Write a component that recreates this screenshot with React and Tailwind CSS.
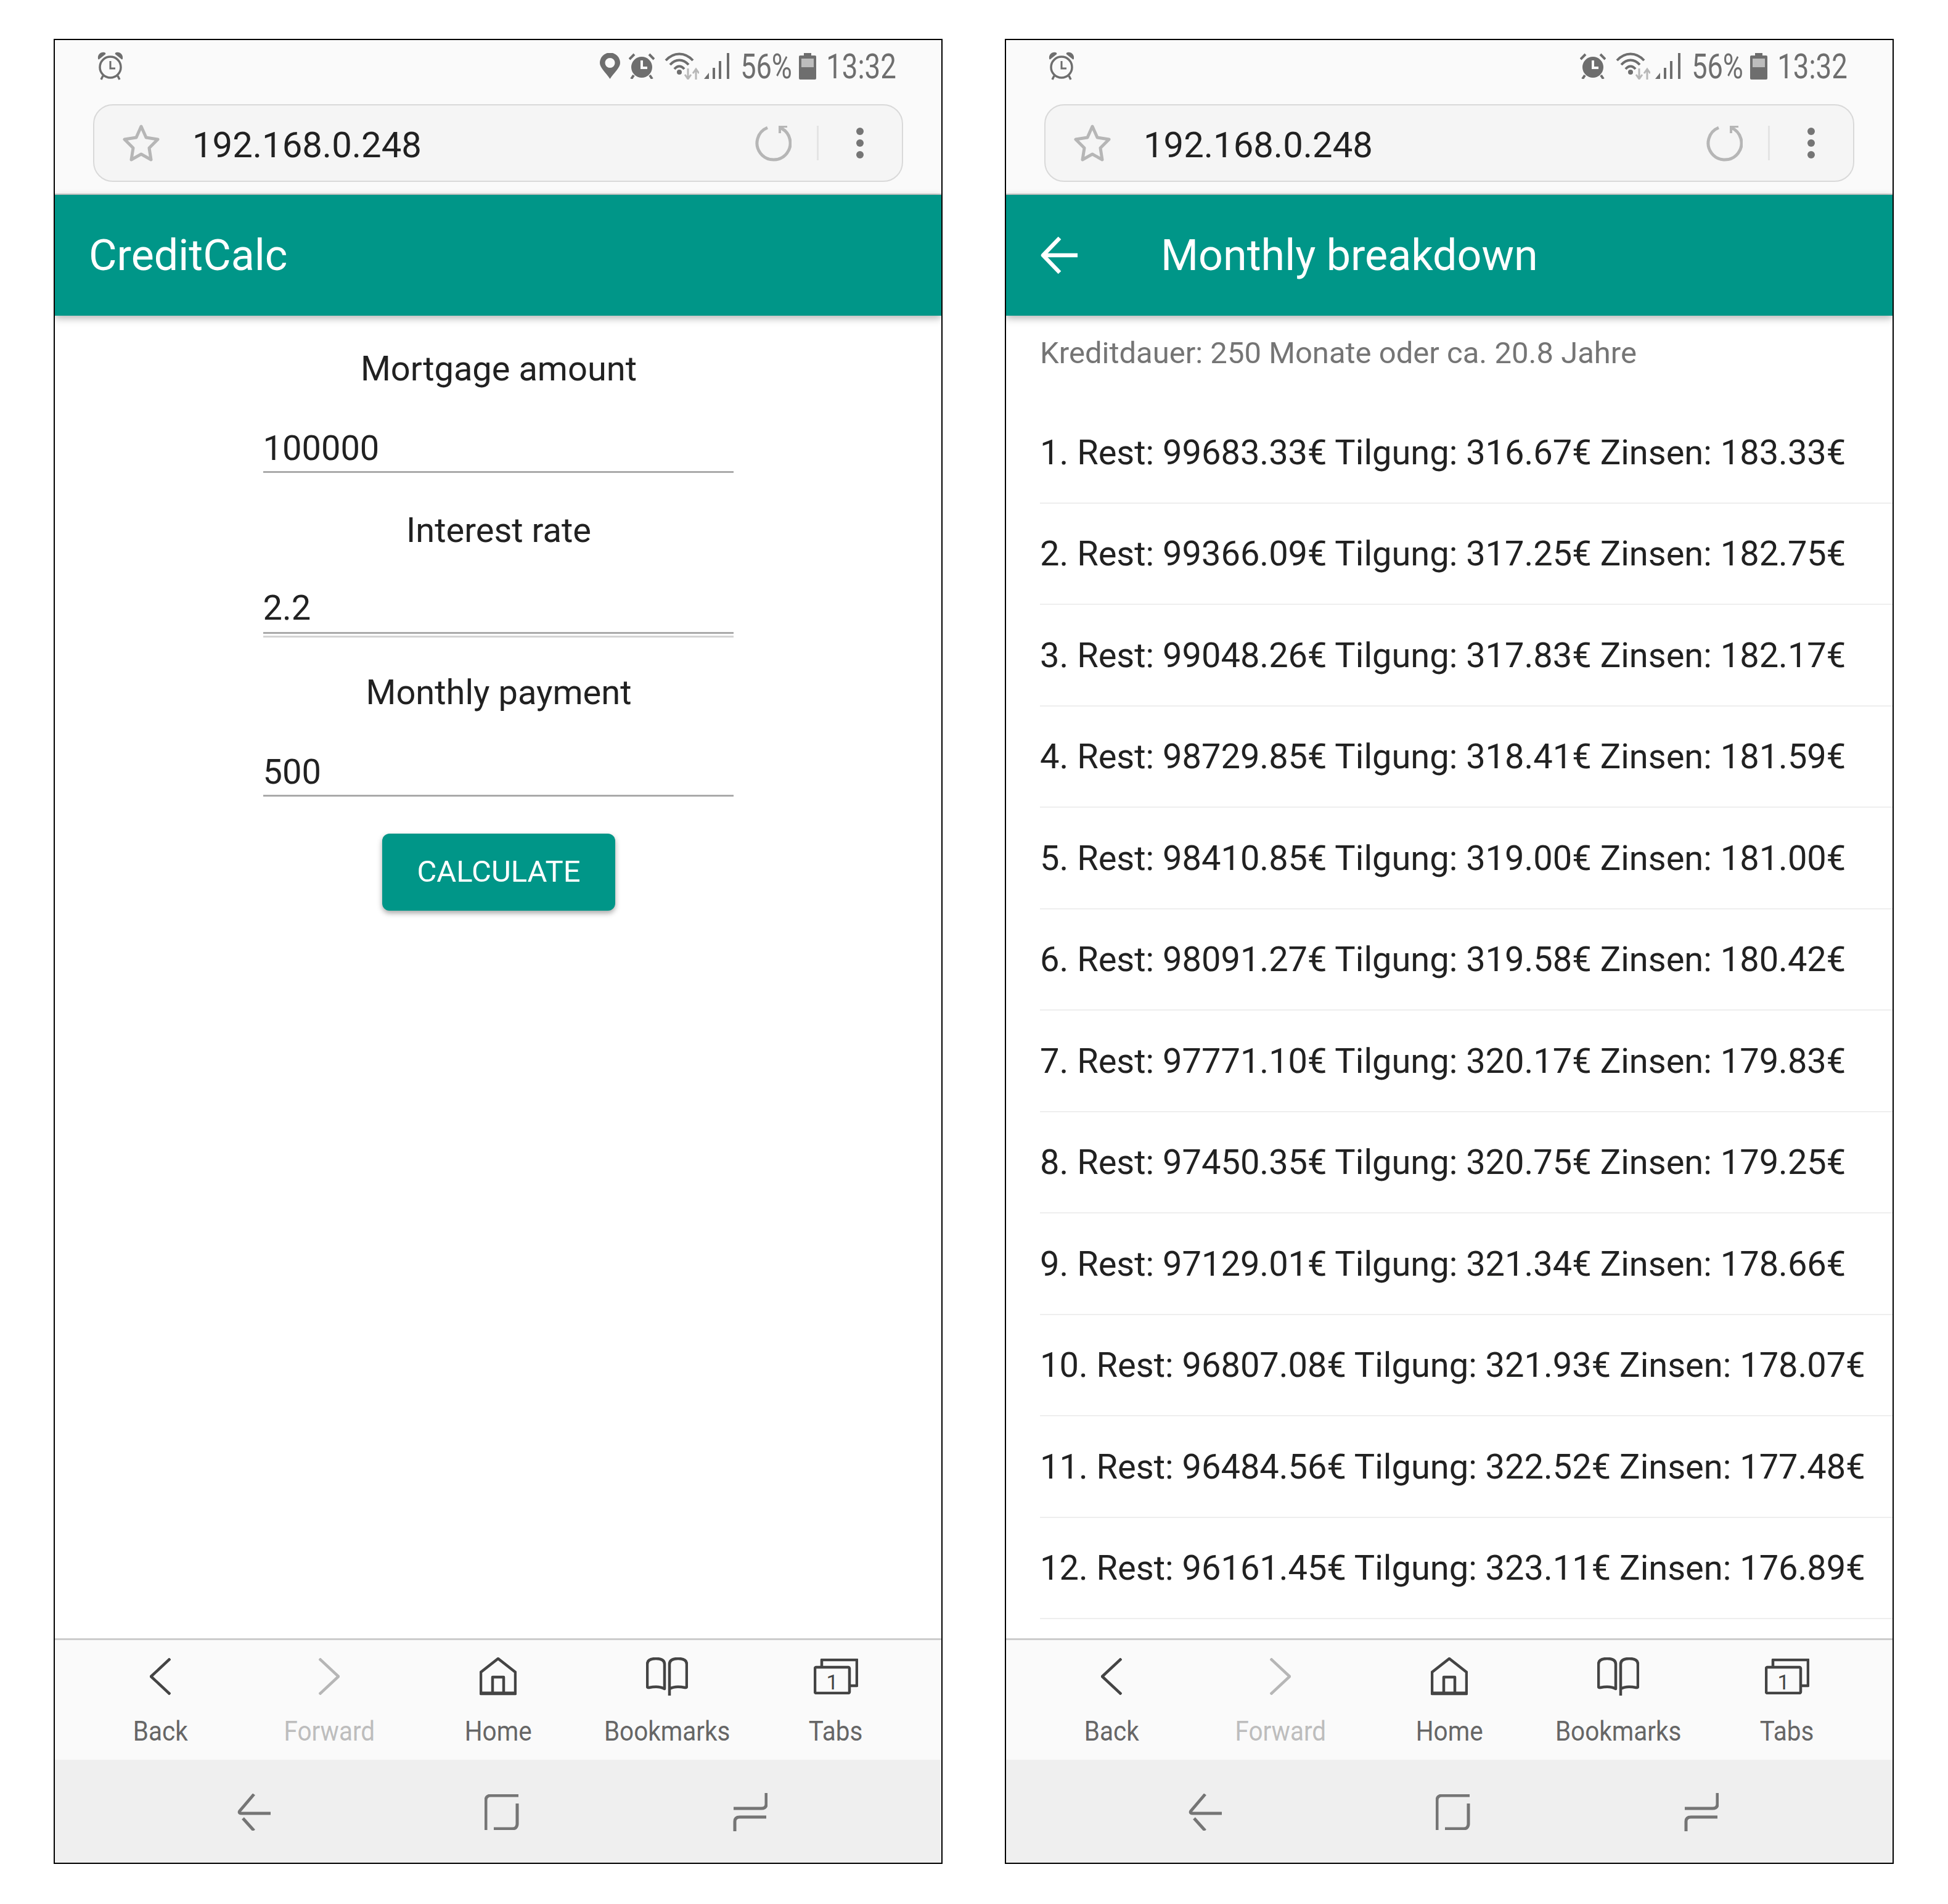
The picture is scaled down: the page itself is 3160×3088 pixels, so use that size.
const rows = [
  '1. Rest: 99683.33€ Tilgung: 316.67€ Zinsen: 183.33€',
  '2. Rest: 99366.09€ Tilgung: 317.25€ Zinsen: 182.75€',
  '3. Rest: 99048.26€ Tilgung: 317.83€ Zinsen: 182.17€',
  '4. Rest: 98729.85€ Tilgung: 318.41€ Zinsen: 181.59€',
  '5. Rest: 98410.85€ Tilgung: 319.00€ Zinsen: 181.00€',
  '6. Rest: 98091.27€ Tilgung: 319.58€ Zinsen: 180.42€',
  '7. Rest: 97771.10€ Tilgung: 320.17€ Zinsen: 179.83€',
  '8. Rest: 97450.35€ Tilgung: 320.75€ Zinsen: 179.25€',
  '9. Rest: 97129.01€ Tilgung: 321.34€ Zinsen: 178.66€',
  '10. Rest: 96807.08€ Tilgung: 321.93€ Zinsen: 178.07€',
  '11. Rest: 96484.56€ Tilgung: 322.52€ Zinsen: 177.48€',
  '12. Rest: 96161.45€ Tilgung: 323.11€ Zinsen: 176.89€',
];

const AlarmOutline = () => (
  <svg width="42" height="46" viewBox="0 0 42 46" fill="none">
    <path d="M1 11C0 5 5 0 11 1c2 0 3 2 2 3L3 12c-1 1-2 0-2-1zM41 11c1-6-4-11-10-10-2 0-3 2-2 3l10 8c1 1 2 0 2-1z" fill="#6e6e6e" />
    <circle cx="21" cy="25" r="17" stroke="#6e6e6e" strokeWidth="3.5" />
    <path d="M21 15v12h8" stroke="#6e6e6e" strokeWidth="3" />
    <path d="M9 39l-3 6M33 39l3 6" stroke="#6e6e6e" strokeWidth="3.5" />
  </svg>
);

const AlarmFilled = () => (
  <svg width="42" height="42" viewBox="0 0 42 42" fill="none">
    <circle cx="21" cy="23" r="17" fill="#6e6e6e" />
    <path d="M1 10L9 2M41 10L33 2" stroke="#6e6e6e" strokeWidth="4" />
    <path d="M8 36l-4 6M34 36l4 6" stroke="#6e6e6e" strokeWidth="4" />
    <path d="M21 12v12h9" stroke="#fafafa" strokeWidth="4" />
  </svg>
);

const Pin = () => (
  <svg width="33" height="42" viewBox="0 0 33 42" fill="none">
    <path fillRule="evenodd" d="M16.5 42C10 32 0 24 0 16a16.5 16.5 0 0 1 33 0c0 8-10 16-16.5 26zM16.5 8a8 8 0 1 0 0 16 8 8 0 0 0 0-16z" fill="#6e6e6e" />
  </svg>
);

const Wifi = () => (
  <svg width="56" height="44" viewBox="0 0 56 44" fill="none">
    <path d="M2 13C15 -1 33 -1 46 13M9 20C18 10 30 10 39 20M16 27C21 21 27 21 32 27" stroke="#6e6e6e" strokeWidth="4" />
    <circle cx="24" cy="32" r="4" fill="#6e6e6e" />
    <path d="M38 26v15M33 36l5 7 5-7" stroke="#b8b8b8" strokeWidth="3" />
    <path d="M51 44V28M46 34l5-7 5 7" stroke="#b8b8b8" strokeWidth="3" />
  </svg>
);

const Signal = () => (
  <svg width="42" height="42" viewBox="0 0 42 42" fill="#6e6e6e">
    <path d="M0 42L8 32v10z" />
    <rect x="14" y="24" width="4" height="18" />
    <rect x="24" y="13" width="4" height="29" />
    <rect x="37" y="0" width="4" height="42" />
  </svg>
);

const Battery = () => (
  <svg width="28" height="43" viewBox="0 0 28 43">
    <path d="M8 0h12v4h6a2 2 0 0 1 2 2v35a2 2 0 0 1-2 2H2a2 2 0 0 1-2-2V6a2 2 0 0 1 2-2h6z" fill="#6e6e6e" />
    <rect x="4" y="9" width="20" height="14" fill="#bdbdbd" />
  </svg>
);

const Star = () => (
  <svg width="60" height="60" viewBox="0 0 60 60" fill="none">
    <path d="M30 3l8 18 19 3-14 14 3 19-16-9-16 9 3-19L3 24l19-3z" stroke="#b6b6b6" strokeWidth="5" strokeLinejoin="round" />
  </svg>
);

const Reload = () => (
  <svg width="60" height="60" viewBox="0 0 60 60" fill="none">
    <path d="M21 5A27 27 0 1 0 41 5" stroke="#b6b6b6" strokeWidth="5" />
    <path d="M39 14V2h14v3H43v9z" fill="#b6b6b6" />
  </svg>
);

const Dots = () => (
  <svg width="12" height="50" viewBox="0 0 12 50" fill="#757575">
    <circle cx="6" cy="6" r="6" />
    <circle cx="6" cy="25" r="6" />
    <circle cx="6" cy="44" r="6" />
  </svg>
);

const ArrowBack = () => (
  <svg width="60" height="60" viewBox="0 0 60 60" fill="none">
    <path d="M31 2L4 30l27 28" stroke="#fff" strokeWidth="6.5" strokeLinejoin="round" />
    <path d="M6 30h54" stroke="#fff" strokeWidth="6.5" />
  </svg>
);

const Toolbar = () => {
  const items = [
    { label: 'Back', color: 'text-[#666666]', icon: <svg width="34" height="60" viewBox="0 0 34 60" fill="none"><path d="M33 1L2 30l31 29" stroke="#444" strokeWidth="4.5" strokeLinejoin="round" /></svg> },
    { label: 'Forward', color: 'text-[#bdbdbd]', icon: <svg width="34" height="60" viewBox="0 0 34 60" fill="none"><path d="M1 1l31 29L1 59" stroke="#b6b6b6" strokeWidth="4.5" strokeLinejoin="round" /></svg> },
    {
      label: 'Home',
      color: 'text-[#666666]',
      icon: (
        <svg width="60" height="62" viewBox="0 0 60 62" fill="none" stroke="#444" strokeWidth="4.5" strokeLinejoin="round">
          <path d="M30 2L2 24v35h56V24z" />
          <path d="M21 59V32h18v27" />
          <path d="M2 58h56" strokeWidth="5" />
        </svg>
      ),
    },
    {
      label: 'Bookmarks',
      color: 'text-[#666666]',
      icon: (
        <svg width="68" height="62" viewBox="0 0 68 62" fill="none" stroke="#444" strokeWidth="4.5" strokeLinejoin="round">
          <path d="M38 62V11C38 5 42 2 52 2s14 3 14 9v36c0 2-1 2-3 2-10-2-18-2-25 2" />
          <path d="M30 51c-7-4-15-4-25-2-2 0-3 0-3-2V11c0-6 4-9 14-9s14 3 14 9z" />
        </svg>
      ),
    },
    {
      label: 'Tabs',
      color: 'text-[#666666]',
      icon: (
        <svg width="72" height="58" viewBox="0 0 72 58" fill="none" stroke="#444" strokeWidth="4.5" strokeLinejoin="round">
          <path d="M13 13V2h57v42H58" />
          <rect x="2" y="14" width="56" height="42" rx="2" />
          <text x="30" y="50" textAnchor="middle" fill="#444" stroke="none" fontSize="34" fontFamily="Roboto, sans-serif">1</text>
        </svg>
      ),
    },
  ];
  return (
    <div className="h-[197px] bg-[#fafafa] border-t-[3px] border-[#cccccc] grid grid-cols-5 px-[34px]">
      {items.map((item) => (
        <div key={item.label} className="flex flex-col items-center">
          <div className="h-[62px] mt-[28px] flex items-center justify-center">{item.icon}</div>
          <div className={`mt-[28px] h-[60px] leading-[60px] flex justify-center whitespace-nowrap text-[44px] scale-x-[.92] ${item.color}`}>
            {item.label}
          </div>
        </div>
      ))}
    </div>
  );
};

const NavBar = () => (
  <div className="h-[167px] pt-[3px] bg-[#efefef] grid grid-cols-3 items-center pl-[122px] pr-[109px]">
    <div className="flex justify-center">
      <svg width="54" height="60" viewBox="0 0 54 60" fill="none" stroke="#757575" strokeWidth="5">
        <path d="M27 1L4 28c-2 3 0 4 3 4h47" />
        <path d="M9 40l18 20" />
      </svg>
    </div>
    <div className="flex justify-center">
      <svg width="56" height="58" viewBox="0 0 56 58" fill="none" stroke="#757575" strokeWidth="5">
        <path d="M2 58V10c0-5 3-8 8-8h45" />
        <path d="M53 15v33c0 5-3 8-8 8H15" />
      </svg>
    </div>
    <div className="flex justify-center">
      <svg width="56" height="62" viewBox="0 0 56 62" fill="none" stroke="#757575" strokeWidth="5">
        <path d="M54 0v18c0 5-3 7-8 7H1" />
        <path d="M54 39H11c-5 0-8 2-8 7v16" />
      </svg>
    </div>
  </div>
);

const Phone = ({ pin, children }) => (
  <div className="w-[1442px] h-[2960px] shrink-0 border-2 border-black flex flex-col overflow-hidden bg-white font-['Roboto',sans-serif]">
    <div className="h-[251px] shrink-0 bg-[#fafafa] border-b-2 border-[#cccccc] flex flex-col">
      <div className="h-[82px] flex items-center justify-between pl-[69px] pr-[75px] mt-[1px]">
        <AlarmOutline />
        <div className="flex items-center">
          {pin && <div className="mr-[14px]"><Pin /></div>}
          <AlarmFilled />
          <div className="ml-[16px]"><Wifi /></div>
          <div className="ml-[8px]"><Signal /></div>
          <div className="ml-[18px] w-[82px] pt-[2px] flex justify-center whitespace-nowrap text-[55px] text-[#6e6e6e] scale-x-[.82] leading-[60px]">56%</div>
          <div className="ml-[12px]"><Battery /></div>
          <div className="ml-[18px] w-[110px] pt-[2px] flex justify-center whitespace-nowrap text-[55px] text-[#6e6e6e] scale-x-[.83] leading-[60px]">13:32</div>
        </div>
      </div>
      <div className="mt-[21px] mx-[62px] h-[126px] rounded-[32px] border-2 border-[#d9d9d9] bg-[#f5f5f5] flex items-center pl-[46px] pr-[62px]">
        <Star />
        <div className="ml-[53px] pt-[6px] text-[58px] text-[#212121]">192.168.0.248</div>
        <div className="ml-auto"><Reload /></div>
        <div className="ml-[41px] w-[3px] h-[56px] bg-[#e4e4e4]" />
        <div className="ml-[61px]"><Dots /></div>
      </div>
    </div>
    {children}
    <Toolbar />
    <NavBar />
  </div>
);

const Field = ({ label, value, inputClass, double }) => (
  <div className="flex flex-col items-center">
    <div className="h-[66px] leading-[66px] text-[56px] text-[#212121] ml-[2px]">{label}</div>
    <div className={`w-[763px] h-[80px] text-[56px] text-[#212121] border-b-[3px] border-[#aaaaaa] box-content ${inputClass}`}>{value}</div>
    {double && <div className="w-[763px] h-[3px] mt-[3px] bg-[#d4d4d4]" />}
  </div>
);

export default function App() {
  return (
    <div className="min-h-screen bg-white flex gap-[101px] pl-[87px] pt-[63px]">
      <Phone pin>
        <div className="h-[196px] shrink-0 bg-[#009688] relative z-10 shadow-[0_4px_12px_rgba(0,0,0,0.3)] flex items-center pl-[55px]">
          <span className="text-[70px] text-white">CreditCalc</span>
        </div>
        <div className="flex-1 flex flex-col items-center pt-[53px]">
          <Field label="Mortgage amount" value="100000" inputClass="mt-[53px] leading-[87px]" />
          <div className="h-[60px]" />
          <Field label="Interest rate" value="2.2" inputClass="mt-[52px] leading-[82px]" double />
          <div className="h-[56px]" />
          <Field label="Monthly payment" value="500" inputClass="mt-[53px] leading-[86px]" />
          <button className="mt-[60px] ml-[2px] w-[378px] h-[125px] pb-[2px] rounded-xl bg-[#009688] text-white text-[49px] shadow-[0_4px_8px_rgba(0,0,0,0.35)]">CALCULATE</button>
        </div>
      </Phone>
      <Phone>
        <div className="h-[196px] shrink-0 bg-[#009688] relative z-10 shadow-[0_4px_12px_rgba(0,0,0,0.3)] flex items-center pl-[56px]">
          <ArrowBack />
          <span className="ml-[135px] text-[70px] text-white">Monthly breakdown</span>
        </div>
        <div className="flex-1 min-h-0 overflow-hidden pl-[55px]">
          <div className="h-[140px] pt-[28px] leading-[66px] text-[49px] text-[#757575]">Kreditdauer: 250 Monate oder ca. 20.8 Jahre</div>
          {rows.map((row) => (
            <div key={row} className="h-[164.5px] pt-[1px] border-b-2 border-[#eeeeee] flex items-center whitespace-nowrap text-[56px] text-[#212121]">{row}</div>
          ))}
        </div>
      </Phone>
    </div>
  );
}
